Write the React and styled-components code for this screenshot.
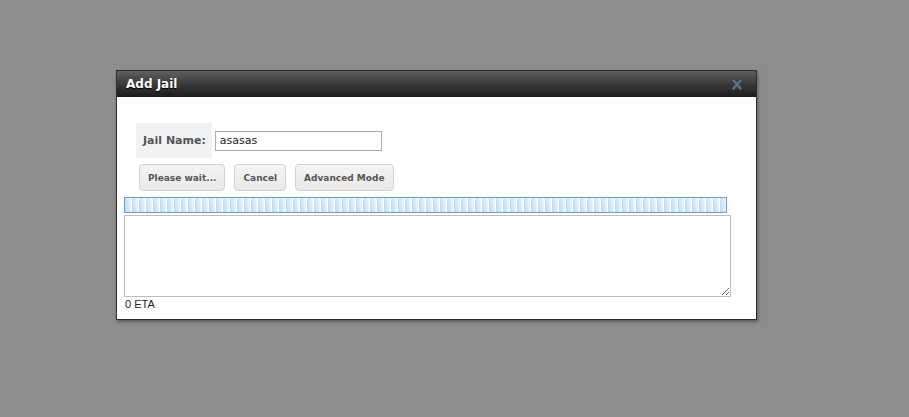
import React from 'react';
import styled, { createGlobalStyle } from 'styled-components';

const GlobalStyle = createGlobalStyle`
    html, body {
        margin: 0;
        padding: 0;
        background: #8d8d8d;
        height: 100%;
    }
    body {
        font-family: "DejaVu Sans", Verdana, sans-serif;
    }
`

const Overlay = styled.div`
    min-height: 417px;
    padding: 70px 0 0 116px;
    box-sizing: border-box;
`

const Dialog = styled.div`
    width: 641px;
    height: 250px;
    box-sizing: border-box;
    border: 1px solid #2e2e2e;
    background: #fff;
    box-shadow: 1px 2px 3px rgba(0, 0, 0, 0.35);
    display: flex;
    flex-direction: column;
`

const TitleBar = styled.div`
    height: 26px;
    display: flex;
    align-items: center;
    justify-content: space-between;
    padding: 0 14px 0 9px;
    background: linear-gradient(to bottom, #5f5f5f 0%, #3a3a3a 50%, #1c1c1c 100%);
    color: #fff;
    font-size: 12px;
    font-weight: bold;
    text-shadow: 0 1px 1px #000;
`

const Body = styled.div`
    padding: 26px 0 0 7px;
    display: flex;
    flex-direction: column;
`

const FormRow = styled.div`
    display: flex;
    align-items: center;
    margin-left: 12px;
`

const Label = styled.div`
    height: 35px;
    display: flex;
    align-items: center;
    padding: 0 6px 0 7px;
    background: #f2f2f2;
    color: #555;
    font-size: 11px;
    font-weight: bold;
`

const TextInput = styled.input`
    margin: 0 0 0 3px;
    width: 167px;
    height: 20px;
    box-sizing: border-box;
    border: 1px solid #a9aeb5;
    padding: 0 4px;
    font-family: "DejaVu Sans", Verdana, sans-serif;
    font-size: 11px;
    color: #222;
    outline: none;
`

const Buttons = styled.div`
    display: flex;
    gap: 9px;
    margin: 6px 0 0 15px;
`

const Button = styled.button`
    height: 27px;
    padding: 0 8px;
    border: 1px solid #d2d2d2;
    border-radius: 4px;
    background: linear-gradient(to bottom, #f4f4f4, #e8e8e8);
    color: #555;
    font-family: "DejaVu Sans", Verdana, sans-serif;
    font-size: 9px;
    font-weight: bold;
`

const Progress = styled.div`
    margin-top: 6px;
    width: 603px;
    height: 16px;
    box-sizing: border-box;
    border: 1px solid #6f9fcb;
    background:
        linear-gradient(to bottom, rgba(255, 255, 255, 0.3), rgba(255, 255, 255, 0)),
        repeating-linear-gradient(to right, #b3d5f6 0px, #e6f2fd 6px, #ffffff 6px, #ffffff 7px);
`

const Log = styled.textarea`
    display: block;
    margin: 2px 0 0 0;
    width: 607px;
    height: 82px;
    box-sizing: border-box;
    border: 1px solid #b9bec5;
    resize: both;
    outline: none;
`

const Eta = styled.div`
    margin: 1px 0 0 1px;
    font-family: "Liberation Sans", Arial, sans-serif;
    font-size: 11px;
    color: #222;
`

const CloseIcon = () => (
    <svg width="10" height="11" viewBox="0 0 10 11">
        <path d="M1.5 1.5 L8.5 9.5 M8.5 1.5 L1.5 9.5" stroke="#3a4552" strokeWidth="3.6" strokeLinecap="round" />
        <path d="M1.5 1.5 L8.5 9.5 M8.5 1.5 L1.5 9.5" stroke="#5f7590" strokeWidth="2" strokeLinecap="round" />
    </svg>
)

const App = () => {
    return (
        <Overlay>
            <GlobalStyle />
            <Dialog>
                <TitleBar>
                    <span>Add Jail</span>
                    <CloseIcon />
                </TitleBar>
                <Body>
                    <FormRow>
                        <Label>Jail Name:</Label>
                        <TextInput defaultValue="asasas" />
                    </FormRow>
                    <Buttons>
                        <Button>Please wait...</Button>
                        <Button>Cancel</Button>
                        <Button>Advanced Mode</Button>
                    </Buttons>
                    <Progress />
                    <Log />
                    <Eta>0 ETA</Eta>
                </Body>
            </Dialog>
        </Overlay>
    );
};

export default App;
